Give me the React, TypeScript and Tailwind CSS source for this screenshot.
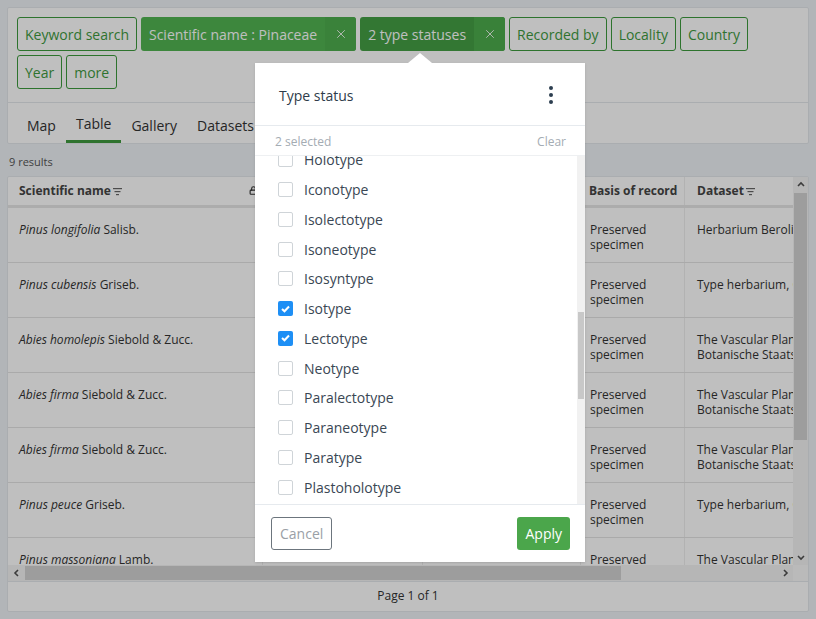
import { X, Lock } from 'lucide-react';

const rows = [
  { genus: 'Pinus longifolia', author: 'Salisb.', dataset: ['Herbarium Berolinense'] },
  { genus: 'Pinus cubensis', author: 'Griseb.', dataset: ['Type herbarium, Geneva'] },
  { genus: 'Abies homolepis', author: 'Siebold & Zucc.', dataset: ['The Vascular Plant Herbarium', 'Botanische Staatssammlung München'] },
  { genus: 'Abies firma', author: 'Siebold & Zucc.', dataset: ['The Vascular Plant Herbarium', 'Botanische Staatssammlung München'] },
  { genus: 'Abies firma', author: 'Siebold & Zucc.', dataset: ['The Vascular Plant Herbarium', 'Botanische Staatssammlung München'] },
  { genus: 'Pinus peuce', author: 'Griseb.', dataset: ['Type herbarium, Geneva'] },
  { genus: 'Pinus massoniana', author: 'Lamb.', dataset: ['The Vascular Plant Herbarium', 'Botanische Staatssammlung München'] },
];

const typeStatuses = [
  { name: 'Holotype', checked: false },
  { name: 'Iconotype', checked: false },
  { name: 'Isolectotype', checked: false },
  { name: 'Isoneotype', checked: false },
  { name: 'Isosyntype', checked: false },
  { name: 'Isotype', checked: true },
  { name: 'Lectotype', checked: true },
  { name: 'Neotype', checked: false },
  { name: 'Paralectotype', checked: false },
  { name: 'Paraneotype', checked: false },
  { name: 'Paratype', checked: false },
  { name: 'Plastoholotype', checked: false },
  { name: 'Syntype', checked: false },
];

const SortIcon = () => (
  <svg width="9" height="8" viewBox="0 0 9 8" className="ml-[2px] mb-[4px]">
    <rect x="0" y="0" width="9" height="1.2" fill="#666" />
    <rect x="1.5" y="3" width="6" height="1.2" fill="#666" />
    <rect x="3" y="6" width="3" height="1.2" fill="#666" />
  </svg>
);

const Chevron = ({ dir }: { dir: 'up' | 'down' | 'left' | 'right' }) => {
  const d = {
    up: 'M2 6 L5 3 L8 6',
    down: 'M2 4 L5 7 L8 4',
    left: 'M6 2 L3 5 L6 8',
    right: 'M4 2 L7 5 L4 8',
  }[dir];
  return (
    <svg width="10" height="10" viewBox="0 0 10 10">
      <path d={d} stroke="#505050" strokeWidth="1.6" fill="none" />
    </svg>
  );
};

const OutlineChip = ({ label }: { label: string }) => (
  <button className="h-[34px] px-[7px] border border-[#3c9a3c] rounded-[3px] text-[#3f9a3f] bg-white">
    {label}
  </button>
);

const App = () => {
  return (
    <div className="relative w-[816px] h-[619px] overflow-hidden bg-[#eef2f6] font-['Open_Sans','Noto_Sans',sans-serif] text-[#333]">
      <div className="flex flex-col px-[7px] pt-[7px]">
        {/* filters + tabs */}
        <div className="bg-white border border-[#e3e7eb] rounded-[2px]">
          <div className="flex flex-wrap gap-[4px] pl-[9px] pr-[48px] pt-[9px] pb-[13px] text-[14px]">
            <OutlineChip label="Keyword search" />
            <div className="flex h-[34px] rounded-[3px] bg-[#52b552] text-white overflow-hidden">
              <span className="flex items-center pl-[8px] pr-[8px]">Scientific name : Pinaceae</span>
              <span className="flex items-center justify-center w-[31px] bg-[#4eae4e]">
                <X size={14} strokeWidth={1.5} />
              </span>
            </div>
            <div className="flex h-[34px] rounded-[3px] bg-[#459f45] text-white overflow-hidden">
              <span className="flex items-center pl-[8px] pr-[8px]">2 type statuses</span>
              <span className="flex items-center justify-center w-[31px] bg-[#4dac4d]">
                <X size={14} strokeWidth={1.5} />
              </span>
            </div>
            <OutlineChip label="Recorded by" />
            <OutlineChip label="Locality" />
            <OutlineChip label="Country" />
            <OutlineChip label="Year" />
            <OutlineChip label="more" />
          </div>
          <div className="flex border-t border-[#e3e7eb] px-[9px] h-[41px] text-[14px]">
            <span className="px-[10px] flex items-center pt-[4px]">Map</span>
            <span className="px-[10px] flex items-center pt-[4px] border-b-[3px] border-[#3f9a3f]">Table</span>
            <span className="px-[10px] flex items-center pt-[4px]">Gallery</span>
            <span className="px-[10px] flex items-center pt-[4px]">Datasets</span>
          </div>
        </div>

        <div className="text-[11px] pl-[2px] pt-[10px] pb-[5px] text-[#555]">9 results</div>

        {/* table */}
        <div className="bg-white border border-[#e3e7eb] rounded-[2px] flex flex-col">
          <div className="flex h-[388px]">
            <div className="flex-1 overflow-hidden text-[12px]">
              <div className="w-[1000px]">
                <div className="flex h-[31px] border-b-[3px] border-[#e6e6e6] font-bold text-[#444] whitespace-nowrap">
                  <div className="w-[255px] flex items-center justify-between pl-[11px] pr-[4px] border-r border-[#eee]">
                    <span className="flex items-end">Scientific name<SortIcon /></span>
                    <Lock size={9} strokeWidth={3} className="text-[#333]" />
                  </div>
                  <div className="w-[160px] border-r border-[#eee]" />
                  <div className="w-[158px] border-r border-[#eee]" />
                  <div className="w-[104px] flex items-center px-[8px] border-r border-[#eee]">Basis of record</div>
                  <div className="w-[200px] flex items-center px-[12px]">
                    <span className="flex items-end">Dataset<SortIcon /></span>
                  </div>
                </div>
                {rows.map((r, i) => (
                  <div key={i} className="flex h-[55px] border-b border-[#e3e3e3] leading-[15px]">
                    <div className="w-[255px] pl-[11px] pt-[14px] border-r border-[#eee]">
                      <i>{r.genus}</i> {r.author}
                    </div>
                    <div className="w-[160px] border-r border-[#eee]" />
                    <div className="w-[158px] border-r border-[#eee]" />
                    <div className="w-[104px] px-[9px] pt-[14px] border-r border-[#eee]">
                      Preserved
                      <br />
                      specimen
                    </div>
                    <div className="w-[200px] px-[12px] pt-[14px]">
                      {r.dataset.map((l) => (
                        <div key={l} className="whitespace-nowrap">{l}</div>
                      ))}
                    </div>
                  </div>
                ))}
              </div>
            </div>
            {/* vertical scrollbar */}
            <div className="w-[15px] flex flex-col bg-[#f3f3f3]">
              <div className="h-[16px] flex items-center justify-center"><Chevron dir="up" /></div>
              <div className="flex-1 flex flex-col">
                <div className="h-[247px] mx-[1px] bg-[#d2d2d2]" />
              </div>
              <div className="h-[16px] flex items-center justify-center"><Chevron dir="down" /></div>
            </div>
          </div>
          {/* horizontal scrollbar */}
          <div className="flex h-[16px] bg-[#f3f3f3]">
            <div className="w-[17px] flex items-center justify-center"><Chevron dir="left" /></div>
            <div className="flex-1 flex items-stretch py-[1px]">
              <div className="w-[596px] bg-[#d2d2d2]" />
            </div>
            <div className="w-[16px] flex items-center justify-center"><Chevron dir="right" /></div>
            <div className="w-[15px] bg-[#f9f9f9]" />
          </div>
          <div className="h-[30px] flex items-center justify-center text-[12px] border-t border-[#e3e7eb]">
            Page 1 of 1
          </div>
        </div>
      </div>

      {/* backdrop */}
      <div className="absolute inset-0 bg-black/25" />

      {/* type status popover */}
      <div className="absolute left-[255px] top-[63px] w-[330px] h-[499px] bg-white flex flex-col shadow-sm">
        <div className="absolute left-[153px] -top-[10px] w-0 h-0 border-l-[12px] border-r-[12px] border-b-[10px] border-l-transparent border-r-transparent border-b-white" />
        <div className="h-[63px] flex items-center justify-between pl-[24px] pr-[32px] pt-[2px] border-b border-[#e6eaee]">
          <span className="text-[14px] text-[#2e3c4a]">Type status</span>
          <div className="flex flex-col gap-[3px]">
            <span className="w-[4px] h-[4px] rounded-full bg-[#2c3e50]" />
            <span className="w-[4px] h-[4px] rounded-full bg-[#2c3e50]" />
            <span className="w-[4px] h-[4px] rounded-full bg-[#2c3e50]" />
          </div>
        </div>
        <div className="h-[30px] flex items-center justify-between pl-[20px] pr-[19px] pt-[2px] text-[12px] text-[#a4acb3] border-b border-[#eef0f2]">
          <span>2 selected</span>
          <span>Clear</span>
        </div>
        <div className="flex-1 flex overflow-hidden border-b border-[#e6eaee]">
          <div className="flex-1 overflow-hidden">
            <div className="-mt-[11px]">
              {typeStatuses.map((t) => (
                <div key={t.name} className="h-[29.75px] flex items-center pl-[23px] gap-[11px] text-[14px] text-[#3a4754]">
                  {t.checked ? (
                    <span className="w-[15px] h-[15px] rounded-[2px] bg-[#1e8ff5] flex items-center justify-center">
                      <svg width="9" height="8" viewBox="0 0 9 8">
                        <path d="M1 4 L3.5 6.3 L8 1.5" stroke="white" strokeWidth="2" fill="none" />
                      </svg>
                    </span>
                  ) : (
                    <span className="w-[15px] h-[15px] rounded-[2px] border border-[#cfd4d8] bg-white" />
                  )}
                  <span>{t.name}</span>
                </div>
              ))}
            </div>
          </div>
          <div className="w-[8px] bg-[#f1f1f1] flex flex-col">
            <div className="h-[156px]" />
            <div className="h-[87px] mx-[1px] bg-[#c8c8c8]" />
          </div>
        </div>
        <div className="h-[57px] flex items-center justify-between pl-[16px] pr-[15px] text-[14px]">
          <button className="h-[33px] px-[8px] border border-[#6c757d] rounded-[3px] text-[#9aa0a6]">Cancel</button>
          <button className="h-[33px] px-[8px] rounded-[3px] bg-[#4ba64b] text-white">Apply</button>
        </div>
      </div>
    </div>
  );
};

export default App;
